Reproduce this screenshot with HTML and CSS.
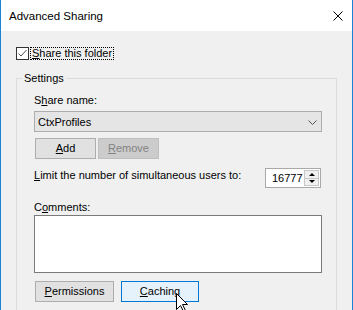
FILE: index.html
```html
<!DOCTYPE html>
<html lang="en">
<head>
    <meta charset="UTF-8">
    <title>Advanced Sharing</title>
    <link rel="stylesheet" href="styles.css">
</head>
<body>
    <div class="window">
        <div class="titlebar">
            <span class="title">Advanced Sharing</span>
            <svg class="close" width="10" height="10" viewBox="0 0 10 10">
                <path d="M0.5 0.5 L9.5 9.5 M9.5 0.5 L0.5 9.5" stroke="#000" stroke-width="1" fill="none"/>
            </svg>
        </div>

        <div class="dialog">
            <div class="check-row">
                <span class="checkbox">
                    <svg width="11" height="11" viewBox="0 0 11 11">
                        <path d="M1.5 5.5 L4 8 L9.5 2" stroke="#4d4d4d" stroke-width="1" fill="none"/>
                    </svg>
                </span>
                <span class="focus-label"><u>S</u>hare this folder</span>
            </div>

            <fieldset class="group">
                <legend>Settings</legend>
                <div class="group-body">
                    <div class="label first">S<u>h</u>are name:</div>
                    <div class="combo">
                        <span>CtxProfiles</span>
                        <svg width="9" height="5" viewBox="0 0 9 5">
                            <path d="M0.5 0.5 L4.5 4.5 L8.5 0.5" stroke="#555" stroke-width="1" fill="none"/>
                        </svg>
                    </div>

                    <div class="button-row">
                        <div class="btn add"><u>A</u>dd</div>
                        <div class="btn disabled"><u>R</u>emove</div>
                    </div>

                    <div class="limit-row">
                        <div class="label"><u>L</u>imit the number of simultaneous users to:</div>
                        <div class="spin">
                            <span class="spin-value">16777</span>
                            <div class="spin-buttons">
                                <div class="spin-btn"><span class="arrow up"></span></div>
                                <div class="spin-btn"><span class="arrow down"></span></div>
                            </div>
                        </div>
                    </div>

                    <div class="label comments">C<u>o</u>mments:</div>
                    <div class="textarea"></div>

                    <div class="button-row bottom">
                        <div class="btn perms"><u>P</u>ermissions</div>
                        <div class="btn caching"><u>C</u>aching</div>
                    </div>
                </div>
            </fieldset>
        </div>

        <svg class="cursor" width="13" height="20" viewBox="0 0 13 20">
            <path d="M0.5 0.5 L0.5 16.5 L4.5 12.5 L7.5 18.5 L9.5 17.5 L6.5 11.5 L11.5 11.5 Z" fill="#fff" stroke="#000" stroke-width="1"/>
        </svg>
    </div>
</body>
</html>
```

FILE: styles.css
```css
:root {
    --accent: #1883d7;
    --face: #f0f0f0;
    --btn-face: #e1e1e1;
    --btn-border: #adadad;
    --text: #000;
}

* {
    box-sizing: border-box;
}

body {
    margin: 0;
    font-family: 'Liberation Sans', Arial, sans-serif;
    font-size: 11px;
    color: var(--text);
}

u {
    text-decoration-thickness: 1px;
    text-underline-offset: 1px;
}

.window {
    position: relative;
    width: 353px;
    height: 310px;
    border-left: 1px solid var(--accent);
    border-right: 1px solid var(--accent);
    overflow: hidden;
    display: flex;
    flex-direction: column;
}

.titlebar {
    height: 31px;
    flex: none;
    background: #fff;
    display: flex;
    align-items: center;
    justify-content: space-between;
    padding: 0 9px 0 8px;
}

.title {
    font-size: 11.5px;
    line-height: 16px;
}

.close {
    display: block;
}

.dialog {
    flex: 1;
    background: var(--face);
    padding: 16px 15px 0 15px;
}

.check-row {
    display: flex;
    align-items: center;
    height: 13px;
}

.checkbox {
    width: 13px;
    height: 13px;
    border: 1px solid #333;
    background: #fff;
    display: flex;
}

.focus-label {
    margin-left: 1px;
    height: 13px;
    line-height: 11px;
    padding: 0 1px 0 1px;
    border: 1px dotted #000;
}

.group {
    margin: 10px 0 0 0;
    padding: 0;
    min-width: 0;
    border: 1px solid #dcdcdc;
}

.group legend {
    margin-left: 5px;
    padding: 0 2px;
    line-height: 16px;
}

.group-body {
    padding: 0 14px 12px 17px;
}

.label {
    line-height: 16px;
}

.label.first {
    margin-top: 6px;
}

.combo {
    margin-top: 3px;
    height: 21px;
    background: #e5e5e5;
    border: 1px solid var(--btn-border);
    display: flex;
    align-items: center;
    justify-content: space-between;
    padding: 0 4px 0 3px;
    line-height: 16px;
}

.combo svg {
    display: block;
    margin-top: 1px;
}

.button-row {
    display: flex;
    gap: 2px;
    margin: 6px 0 0 1px;
}

.btn {
    height: 21px;
    line-height: 19px;
    text-align: center;
    background: var(--btn-face);
    border: 1px solid var(--btn-border);
}

.btn.add,
.btn.disabled {
    width: 61px;
}

.btn.disabled {
    background: #cccccc;
    border-color: #bfbfbf;
    color: #838383;
}

.limit-row {
    display: flex;
    align-items: flex-start;
    justify-content: space-between;
    margin-top: 8px;
}

.spin {
    margin: 1px 1px 0 0;
    width: 56px;
    height: 20px;
    border: 1px solid #a9a9a9;
    background: #fff;
    display: flex;
    align-items: center;
    justify-content: space-between;
    padding: 0 1px 0 6px;
}

.spin-value {
    line-height: 16px;
}

.spin-buttons {
    display: flex;
    flex-direction: column;
    width: 15px;
    height: 16px;
}

.spin-btn {
    flex: 1;
    background: #f0f0f0;
    border: 1px solid #c8c8c8;
    display: flex;
    align-items: center;
    justify-content: center;
}

.spin-btn + .spin-btn {
    border-top: none;
}

.arrow {
    width: 0;
    height: 0;
    border-left: 3px solid transparent;
    border-right: 3px solid transparent;
}

.arrow.up {
    border-bottom: 3px solid #000;
}

.arrow.down {
    border-top: 3px solid #000;
}

.label.comments {
    margin-top: 12px;
    line-height: 15px;
}

.textarea {
    height: 58px;
    background: #fff;
    border: 1px solid #7a7a7a;
}

.button-row.bottom {
    gap: 7px;
    margin-top: 8px;
}

.btn.perms {
    width: 79px;
}

.btn.caching {
    width: 78px;
    background: #e5f1fb;
    border-color: #0078d7;
}

.cursor {
    position: absolute;
    left: 175px;
    top: 293px;
}
```
